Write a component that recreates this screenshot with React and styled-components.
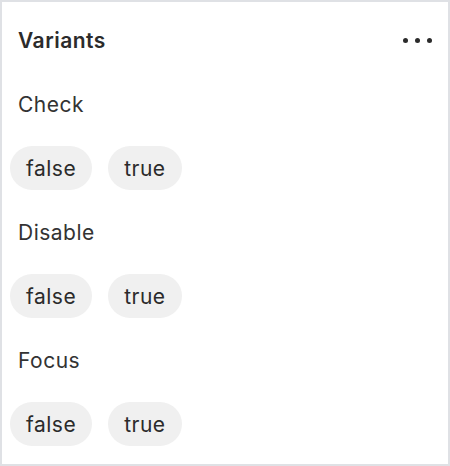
import React from "react";
import styled, { createGlobalStyle } from "styled-components";

const Global = createGlobalStyle`
  html, body { margin: 0; padding: 0; background: #ffffff; }
  * { box-sizing: border-box; }
`;

const Panel = styled.div`
  width: 450px;
  height: 466px;
  border: 2px solid #dfe1e5;
  background: #ffffff;
  padding: 0 16px 0 8px;
  font-family: Inter, "Noto Sans", sans-serif;
  color: #333333;
  letter-spacing: 0.5px;
  display: flex;
  flex-direction: column;
`;

const Header = styled.div`
  height: 76px;
  display: flex;
  align-items: center;
  justify-content: space-between;
  padding-left: 8px;
`;

const Title = styled.div`
  font-size: 21px;
  font-weight: 600;
  color: #2b2b2b;
`;

const MoreButton = styled.div`
  display: flex;
  gap: 7px;
  align-items: center;
`;

const Dot = styled.span`
  width: 5px;
  height: 5px;
  border-radius: 50%;
  background: #2b2b2b;
`;

const Section = styled.div`
  display: flex;
  flex-direction: column;
  gap: 16px;
  margin-bottom: 16px;
`;

const Label = styled.div`
  height: 52px;
  display: flex;
  align-items: center;
  padding-left: 8px;
  font-size: 21px;
  font-weight: 400;
  color: #333333;
`;

const Options = styled.div`
  display: flex;
  gap: 16px;
`;

const Pill = styled.button`
  height: 44px;
  padding: 0 16px;
  border: none;
  border-radius: 22px;
  background: #f0f0f0;
  font-family: inherit;
  letter-spacing: inherit;
  font-size: 21px;
  color: #2b2b2b;
  display: flex;
  align-items: center;
  cursor: pointer;
`;

const groups = ["Check", "Disable", "Focus"];

export default function App() {
  return (
    <>
      <Global />
      <Panel>
        <Header>
          <Title>Variants</Title>
          <MoreButton>
            <Dot />
            <Dot />
            <Dot />
          </MoreButton>
        </Header>
        {groups.map((g) => (
          <Section key={g}>
            <Label>{g}</Label>
            <Options>
              <Pill>false</Pill>
              <Pill>true</Pill>
            </Options>
          </Section>
        ))}
      </Panel>
    </>
  );
}
